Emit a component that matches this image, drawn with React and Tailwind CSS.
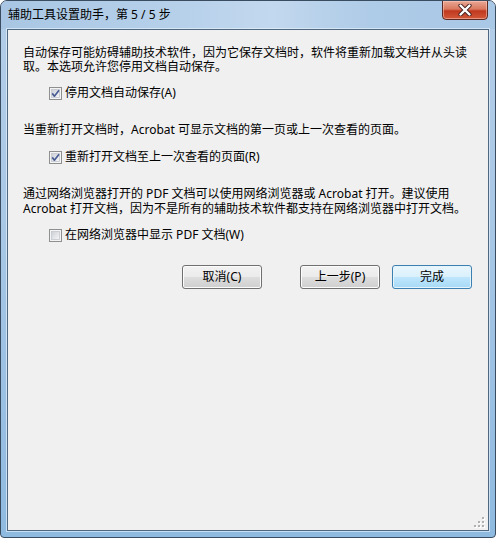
import React from 'react'

const font = "font-['Noto_Sans','Noto_Sans_CJK_SC',sans-serif]"

function CheckBox({ checked }) {
  return (
    <svg width="13" height="13" viewBox="0 0 13 13" className="shrink-0">
      <defs>
        <linearGradient id="cbg" x1="0" y1="0" x2="1" y2="1">
          <stop offset="0" stopColor="#cbcfd5" />
          <stop offset="1" stopColor="#f7f7f7" />
        </linearGradient>
      </defs>
      <rect x="0.5" y="0.5" width="12" height="12" fill="#f4f4f4" stroke="#8e8f8f" />
      <rect x="2.5" y="2.5" width="8" height="8" fill="url(#cbg)" stroke="#c4c8ce" strokeWidth="0.8" />
      {checked && (
        <path d="M3.2 6.4 L5.4 9.2 L10 3.3" fill="none" stroke="#4a5d94" strokeWidth="1.7" strokeLinejoin="round" />
      )}
    </svg>
  )
}

function CheckRow({ checked, label }) {
  return (
    <div className="flex items-center pl-[41px] h-[14px] leading-[14px]">
      <CheckBox checked={checked} />
      <span className="ml-[3px] whitespace-nowrap">{label}</span>
    </div>
  )
}

function Btn({ children, primary, className = '' }) {
  return (
    <button
      className={
        'w-[80px] h-[24px] rounded-[3px] border text-[12px] leading-none text-black ' +
        (primary
          ? 'border-[#3c7fb1] bg-[linear-gradient(#eaf6fd_0%,#d9f0fc_50%,#bee6fd_51%,#a7d9f5_100%)] shadow-[inset_0_0_0_1px_#e6f4fc] '
          : 'border-[#707070] bg-[linear-gradient(#f2f2f2_0%,#ebebeb_50%,#dddddd_51%,#cfcfcf_100%)] shadow-[inset_0_0_0_1px_#fcfcfc] ') +
        className
      }
    >
      {children}
    </button>
  )
}

function ResizeGrip() {
  const dots = [
    [8, 0],
    [4, 4], [8, 4],
    [0, 8], [4, 8], [8, 8],
  ]
  return (
    <svg width="11" height="11" viewBox="0 0 11 11" className="absolute right-[3px] bottom-[2px]">
      {dots.map(([x, y], i) => (
        <g key={i}>
          <rect x={x + 1} y={y + 1} width="2" height="2" fill="#ffffff" />
          <rect x={x} y={y} width="2" height="2" fill="#b0b0b0" />
        </g>
      ))}
    </svg>
  )
}

export default function App() {
  return (
    <div className={'w-[496px] h-[538px] bg-white ' + font}>
      <div className="relative w-[496px] h-[538px] flex flex-col rounded-t-[7px] rounded-b-[4px] border border-[#3a4c60] bg-[linear-gradient(180deg,#b3cde8_0%,#a9c8e6_40%,#8fbae0_100%)] overflow-hidden">
        {/* title bar */}
        <div className="h-[28px] flex items-center pl-[7px] text-[12px] text-black bg-[linear-gradient(90deg,#a8c6e3_0%,#b6d0ea_35%,#c2d8ee_55%,#aecbe7_75%,#a9c8e6_100%)]">
          辅助工具设置助手，第 5 / 5 步
        </div>

        {/* close button */}
        <div className="absolute top-[-1px] right-[7px] w-[46px] h-[20px] rounded-b-[4px] border border-[#5b2a22] bg-[linear-gradient(180deg,#e9a894_0%,#d9785f_45%,#c0391f_55%,#d2583a_100%)] shadow-[inset_0_0_0_1px_rgba(255,210,200,0.5)] flex items-center justify-center">
          <svg width="14" height="12" viewBox="0 0 14 12">
            <path d="M2.5 1.5 L11.5 10.5 M11.5 1.5 L2.5 10.5" stroke="#4a2020" strokeWidth="4.2" strokeLinecap="round" />
            <path d="M2.5 1.5 L11.5 10.5 M11.5 1.5 L2.5 10.5" stroke="#ffffff" strokeWidth="2.4" strokeLinecap="round" />
          </svg>
        </div>

        {/* frame + client */}
        <div className="flex-1 px-[6px] pb-[6px] flex">
          <div className="relative flex-1 border border-[#4f6882] bg-[#f0f0f0] shadow-[0_0_0_1px_rgba(230,240,250,0.7)] text-[12px] text-black">
            <div className="pt-[16px]">
              <p className="pl-[15px] leading-[14px] whitespace-nowrap">
                自动保存可能妨碍辅助技术软件，因为它保存文档时，软件将重新加载文档并从头读
                <br />
                取。本选项允许您停用文档自动保存。
              </p>

              <div className="mt-[12px]">
                <CheckRow checked label="停用文档自动保存(A)" />
              </div>

              <p className="mt-[23px] pl-[15px] leading-[14px] whitespace-nowrap">
                当重新打开文档时，Acrobat 可显示文档的第一页或上一次查看的页面。
              </p>

              <div className="mt-[13px]">
                <CheckRow checked label="重新打开文档至上一次查看的页面(R)" />
              </div>

              <p className="mt-[22px] pl-[15px] leading-[15px] whitespace-nowrap">
                通过网络浏览器打开的 PDF 文档可以使用网络浏览器或 Acrobat 打开。建议使用
                <br />
                Acrobat 打开文档，因为不是所有的辅助技术软件都支持在网络浏览器中打开文档。
              </p>

              <div className="mt-[12px]">
                <CheckRow label="在网络浏览器中显示 PDF 文档(W)" />
              </div>

              <div className="mt-[23px] flex justify-end pr-[16px]">
                <Btn className="mr-[38px]">取消(C)</Btn>
                <Btn className="mr-[12px]">上一步(P)</Btn>
                <Btn primary>完成</Btn>
              </div>
            </div>
            <ResizeGrip />
          </div>
        </div>
      </div>
    </div>
  )
}
